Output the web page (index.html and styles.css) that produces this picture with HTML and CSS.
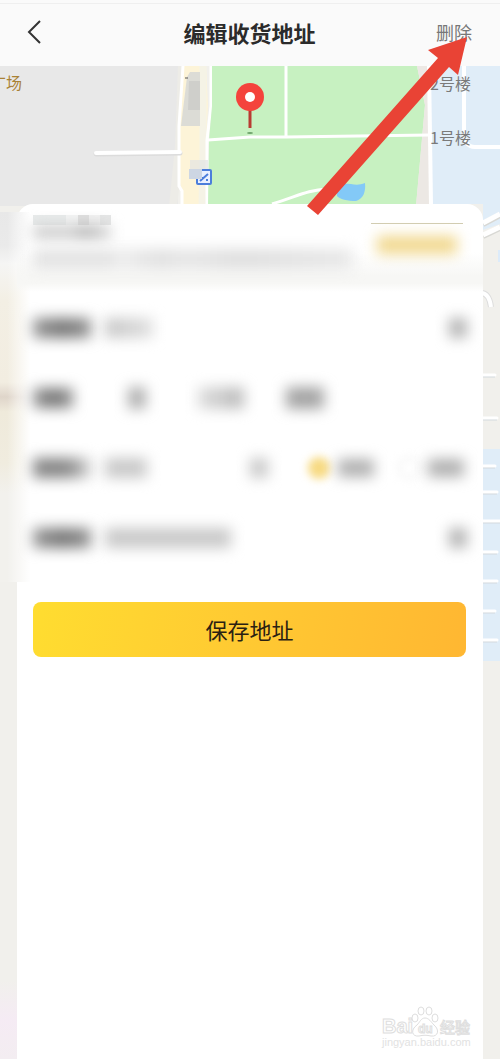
FILE: index.html
```html
<!DOCTYPE html>
<html lang="zh-CN">
<head>
<meta charset="utf-8">
<meta name="viewport" content="width=device-width, initial-scale=1">
<title>编辑收货地址</title>
<link rel="stylesheet" href="styles.css">
</head>
<body>
<div class="page">
  <header class="topbar">
    <button class="back" type="button" aria-label="返回">
      <svg width="14" height="24" viewBox="0 0 14 24" aria-hidden="true"><path d="M13 1 2 12l11 11" fill="none" stroke="#333" stroke-width="2"/></svg>
    </button>
    <h1 class="title">编辑收货地址</h1>
    <button class="delete" type="button">删除</button>
  </header>

  <main class="stage">
    <svg class="map" viewBox="0 66 500 993" preserveAspectRatio="xMidYMin slice" aria-hidden="true">
      <defs>
        <linearGradient id="pink" x1="0" y1="0" x2="0" y2="1">
          <stop offset="0" stop-color="#f1f0ec"/>
          <stop offset=".5" stop-color="#f5ebf4"/>
          <stop offset="1" stop-color="#f3edf1"/>
        </linearGradient>
      </defs>
      <rect y="66" width="500" height="993" fill="#f1f0ec"/>
      <path d="M0 66h182l-4 80v60H0z" fill="#e8e8e8"/>
      <path d="M178 66h5l-4 64v60l-2 16h-8l6-60z" fill="#edece7"/>
      <path d="M184 66h22l2 40-6 100h-20l-1-20-3-7 1-73z" fill="#fdf4d8"/>
      <path d="M183 66l-4 60v60l3 5v15" fill="none" stroke="#fff" stroke-width="3"/>
      <path d="M203 66v90l-1 50" fill="none" stroke="#f5f3e6" stroke-width="7"/>
      <path d="M207 206V140l4-34V66" fill="none" stroke="#fff" stroke-width="3"/>
      <path d="M187 77l3-5h10v54h-19z" fill="#dcdcd6"/>
      <path d="M189 81h11v29h-12z" fill="#cfcfcb"/>
      <path d="M185 78h3" stroke="#555" stroke-width="1"/>
      <path d="M96 154l84-1" stroke="#dcdcdc" stroke-width="5" stroke-linecap="round"/>
      <path d="M96 153l84-1" stroke="#fff" stroke-width="4" stroke-linecap="round"/>
      <path d="M212 66h205l8 39-9 101H208l1-66 3-34z" fill="#c7f1c1"/>
      <path d="M417 66h13v140h-14l9-101z" fill="#ece8e4"/>
      <path d="M431 66h69v158l-17 6v-26h-52z" fill="#e0edf8"/>
      <g fill="none" stroke="#fff">
        <path d="M286 66v71M208 140l42-3h36l144-2" stroke-width="3"/>
        <path d="M272 204c24-7 35-14 55-15" stroke-width="3"/>
        <path d="M429 66l2 140" stroke-width="4"/>
        <path d="M464 66v62c0 15 4 19 11 19h25" stroke-width="4"/>
      </g>
      <path d="M337 187c5-3 6-4 14-3 5 1 9 1 14-1 1 9-2 16-9 18-8 0-17-2-19-5z" fill="#83c9f7"/>
      <path d="M483 224l17-9M483 236l17-8" stroke="#d8d8d4" stroke-width="6"/>
      <path d="M483 223l17-9M483 235l17-8" stroke="#fff" stroke-width="5"/>
      <path d="M481 293c6 0 9 6 10 14" fill="none" stroke="#ddd" stroke-width="6"/>
      <path d="M481 293c6 0 9 6 10 14" fill="none" stroke="#fff" stroke-width="4"/>
      <path d="M483 449h17v212h-17z" fill="#e0edf8"/>
      <path d="M498 250h2v12h-2z" fill="#dcebfa"/>
      <path d="M483 376h12m-12 43h14m-14 48h12m-12 26h14m-14 29h17m-17 31h14m-14 29h14m-14 30h12m-12 29h14" stroke="#d3d9dd" stroke-width="3"/>
      <path d="M483 375h12m-12 43h14m-14 48h12m-12 26h14m-14 29h17m-17 31h14m-14 29h14m-14 30h12m-12 29h14" stroke="#fff" stroke-width="3" stroke-linecap="round"/>
      <rect x="190" y="160" width="18" height="18" fill="#e2e4e2" opacity=".7"/>
      <rect x="197" y="170" width="14" height="14" rx="1" fill="#e9f0ff" stroke="#4c7edb" stroke-width="2"/>
      <path d="M200 181l8-7M201 178h2m3 2h2" stroke="#4c7edb" stroke-width="2" fill="none"/>
      <rect x="189" y="169" width="13" height="10" fill="#cdd6e3"/>
      <ellipse cx="250" cy="133" rx="3" ry="1" fill="#6fa36c"/>
      <path d="M250 106v22" stroke="#b83b32" stroke-width="3"/>
      <circle cx="250" cy="97" r="14" fill="#f4433c"/>
      <circle cx="250" cy="97" r="5" fill="#fff"/>
      <g class="map-label">
        <text x="430" y="90">2号楼</text>
        <text x="430" y="144">1号楼</text>
        <text class="map-label-gold" x="-10" y="89">广场</text>
      </g>
      <path d="M0 980h17v79H0z" fill="url(#pink)"/>
    </svg>

    <form class="sheet">
      <div class="haze"></div>
      <section class="place">
        <div class="place-text">
          <div class="mosaic"><i></i><i></i><i></i><i></i><i></i></div>
          <div class="smudge name"></div>
          <div class="smudge detail"></div>
        </div>
        <button class="change" type="button" aria-label="修改地址"><span class="smudge gold"></span></button>
      </section>

      <div class="row">
        <span class="smudge label wide"></span>
        <span class="smudge value short"></span>
        <span class="smudge dot"></span>
      </div>
      <div class="row">
        <span class="smudge label narrow"></span>
        <span class="tags">
          <span class="smudge tag one"></span>
          <span class="smudge tag"></span>
          <span class="smudge tag dark"></span>
        </span>
      </div>
      <div class="row">
        <span class="smudge label fade"></span>
        <span class="smudge value mini"></span>
        <span class="smudge dot pale"></span>
        <span class="choices">
          <input class="radio on" type="radio" name="gender" aria-label="先生" checked>
          <span class="smudge choice"></span>
          <input class="radio" type="radio" name="gender" aria-label="女士">
          <span class="smudge choice"></span>
        </span>
      </div>
      <div class="row">
        <span class="smudge label wide"></span>
        <span class="smudge value long"></span>
        <span class="smudge dot"></span>
      </div>

      <button class="save" type="button">保存地址</button>

      <svg class="watermark" width="92" height="46" viewBox="0 0 92 46" role="img" aria-label="Baidu 经验">
        <g class="mark">
          <text class="mark-latin" x="1" y="28">Bai</text>
          <path d="M44 13c-4 0-5 4-8 7-7 5-5 12 2 11 4-1 8-1 12 0 7 1 9-6 3-11-3-3-5-7-9-7z"/>
          <ellipse cx="34" cy="13" rx="3" ry="4"/>
          <ellipse cx="40" cy="6" rx="3" ry="4"/>
          <ellipse cx="48" cy="6" rx="3" ry="4"/>
          <ellipse cx="54" cy="13" rx="3" ry="4"/>
          <text class="mark-du" x="37" y="28">du</text>
          <text class="mark-cjk" x="59" y="28">经验</text>
        </g>
        <text class="mark-url" x="1" y="41">jingyan.baidu.com</text>
      </svg>
    </form>
  </main>

  <svg class="arrow" width="162" height="180" viewBox="306 36 162 180" aria-hidden="true"><path d="M467 37 428 50l10 8-131 148 11 9L449 67l9 8z" fill="#e94335"/></svg>
</div>
</body>
</html>
```
FILE: styles.css
```css
* { box-sizing: border-box; }

body {
  margin: 0;
  font-family: "Noto Sans CJK SC", sans-serif;
  color: #2b2b2b;
}

button {
  border: 0;
  padding: 0;
  background: none;
  font: inherit;
  color: inherit;
}

.page {
  position: relative;
  display: flex;
  flex-direction: column;
  min-height: 100vh;
  overflow: hidden;
}

.topbar {
  display: grid;
  grid-template-columns: 1fr auto 1fr;
  align-items: center;
  height: 66px;
  padding: 2px 28px 4px 27px;
  background: linear-gradient(#efefef, #efefef) 0 3px / 100% 1px no-repeat #fafafa;
}

.back { justify-self: start; display: flex; }

.title {
  margin: 0;
  font-size: 22px;
  line-height: 32px;
  font-weight: 700;
}

.delete {
  justify-self: end;
  font-size: 18px;
  line-height: 26px;
  color: #777;
}

.stage {
  position: relative;
  flex: 1;
  display: flex;
  padding: 138px 17px 0;
}

.map {
  position: absolute;
  inset: 0;
  width: 100%;
  height: 100%;
}

.map-label { font-size: 16px; fill: #7a7a7a; }
.map-label-gold { fill: #a98235; }

.sheet {
  position: relative;
  flex: 1;
  display: flex;
  flex-direction: column;
  background: #fff;
  border-radius: 16px 16px 0 0;
}

/* Soft edge where the sheet's obscured part meets the map */
.haze {
  position: absolute;
  left: -17px;
  top: 8px;
  width: 36px;
  height: 370px;
  background:
    linear-gradient(90deg, transparent 20%, #fff 85%),
    linear-gradient(#e8e8e8, #eaeaea 9%, #f5f5f4 14%, #f3efe4 24%, #f2ede1 46%, #dfd5ca 50%, #efeadb 54%, #f0ecdf 68%, #f2f1ed 76%, #f2f1ed);
}

.place {
  position: relative;
  display: flex;
  justify-content: space-between;
  height: 88px;
  padding: 11px 20px 0 16px;
  border-radius: 16px 16px 0 0;
  background: linear-gradient(transparent 55%, #f7f7f5 82%, #f7f7f5 90%, transparent);
}

.place-text { flex: 1; }

.mosaic { display: flex; height: 10px; width: 78px; }
.mosaic i { flex: 1; background: #e8ebeb; }
.mosaic i:nth-child(1) { flex: 3; }
.mosaic i:nth-child(2) { background: #f4f5f5; }
.mosaic i:nth-child(3) { background: #dfdfdf; }
.mosaic i:nth-child(4) { background: #f2f2f2; }
.mosaic i:nth-child(5) { background: #e5e6e6; }

.smudge { display: block; filter: blur(7px); }

.name {
  width: 78px;
  height: 14px;
  background: linear-gradient(90deg, #cdcdcd, #cfcfcf 50%, #b2b2b2 65%, #dadada);
}

.detail {
  width: 320px;
  max-width: 100%;
  height: 20px;
  margin-top: 10px;
  background: linear-gradient(90deg, #e3e3e3 24%, #ededed 27%, #e0e0e0 40%, #e6e6e6 48%, #dedede 65%, #e8e8e8);
}

.change {
  align-self: flex-start;
  margin-top: 8px;
  width: 92px;
  padding: 12px 6px;
  border-top: 1px solid #d2cdb2;
}

.gold { height: 18px; background: #f1d88e; }

.row {
  position: relative;
  display: flex;
  align-items: center;
  height: 70px;
  padding: 2px 16px 0;
}

.label {
  height: 20px;
  margin-right: 14px;
  background: linear-gradient(90deg, #999, #747474 50%, #949494);
}

.label.wide { width: 58px; }
.label.narrow { width: 40px; }
.label.fade {
  width: 58px;
  background: linear-gradient(90deg, #858585, #858585 60%, #d8d8d8);
}

.value { height: 20px; background: #c9c9c9; }
.value.short { width: 48px; background: linear-gradient(90deg, #c6c6c6, #e0e0e0); }
.value.mini { width: 42px; }
.value.long { width: 126px; }

.dot { width: 18px; height: 20px; margin-left: auto; background: #b4b4b4; }
.dot.pale { background: #c9c9c9; }

.tags { display: flex; gap: 42px; margin-left: 41px; }
.tag { width: 46px; height: 22px; background: linear-gradient(90deg, #dedede, #b8b8b8); }
.tag.one { width: 18px; margin-right: 10px; background: #b0b0b0; }
.tag.dark { width: 38px; background: #a4a4a4; }

.choices { display: flex; align-items: center; gap: 8px; margin-left: 40px; padding-right: 3px; }

.radio {
  appearance: none;
  width: 22px;
  height: 22px;
  margin: 0;
  border: 2px solid #eee;
  border-radius: 50%;
  filter: blur(4px);
}

.radio.on { border: 0; background: #f7da83; }

.choice { width: 36px; height: 18px; background: #b0b0b0; }
.choice + .radio { margin-left: 16px; }

.save {
  margin: 30px 17px 0 16px;
  height: 55px;
  padding-bottom: 2px;
  border-radius: 8px;
  background: linear-gradient(100deg, #ffdd30, #ffc932 50%, #ffb732);
  font-size: 22px;
  line-height: 32px;
  color: #2a2112;
}

.watermark { margin: auto 10px 8px auto; }

.mark {
  fill: #fff;
  stroke: #dedede;
  stroke-width: 1px;
}

.mark-latin { font: 700 20px "Liberation Sans", sans-serif; }
.mark-du { font: 700 12px "Liberation Sans", sans-serif; }
.mark-cjk { font-size: 15px; font-weight: 500; }
.mark-url { font: 11px "Liberation Sans", sans-serif; fill: #e2e2e2; }

.arrow {
  position: absolute;
  top: 36px;
  right: 32px;
}
```
